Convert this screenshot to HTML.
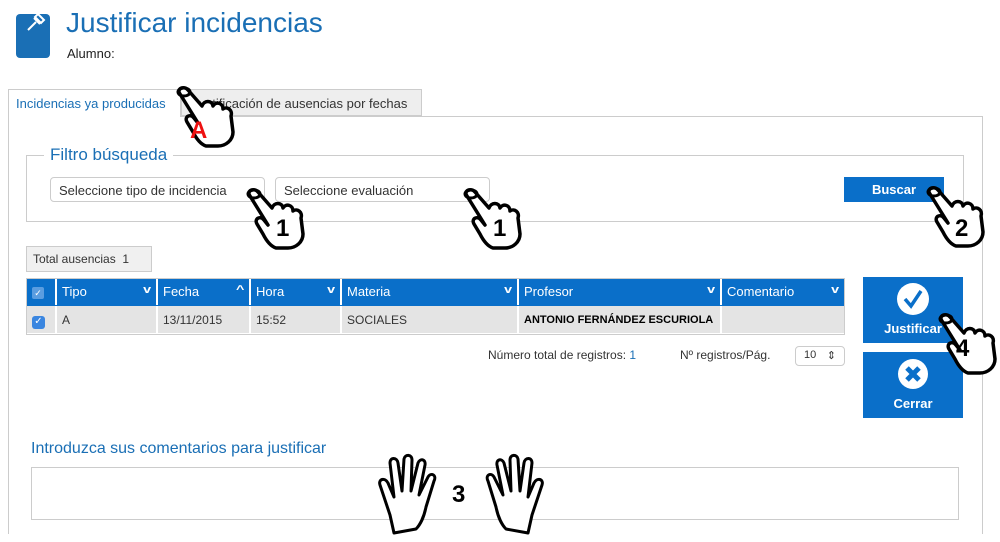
<!DOCTYPE html><html><head><meta charset="utf-8"><style>
*{box-sizing:border-box;margin:0;padding:0}
html{width:1000px;height:542px;overflow:hidden}
body{width:1000px;height:542px;background:#fff;font-family:"Liberation Sans",sans-serif;color:#333;position:relative;overflow:hidden;font-size:13px}
.a{position:absolute}
.blue{color:#1a6fb5}
.sel{position:absolute;border:1px solid #ccc;border-radius:4px;background:#fff;font-size:13px;padding:5px 8px;height:25px}
.th{position:absolute;top:0;height:26px;color:#fff;font-size:13px;padding:5px 5px;border-right:2px solid #fff}
.td{position:absolute;top:27px;height:27px;font-size:12px;padding:7px 5px;background:#e4e4e4;border-right:2px solid #fff}
.th i{position:absolute;right:6px;top:5px;font-style:normal;font-size:11px;font-weight:bold;transform:scaleX(1.3)}
.btn{position:absolute;background:#0a6fc9;color:#fff;font-weight:bold;text-align:center}
</style></head><body>
<svg width="0" height="0" style="position:absolute"><defs>
<g id="hand"><path d="M2 6 C-2 1 6 -3 10 2 L24 18 C26 12 34 12 35 18 C38 13 45 15 45 21 C49 18 55 22 53 28 L55 44 C55 52 48 58 40 58 L28 58 C22 56 18 50 15 44 L9 34 C6 29 12 25 16 30 L20 35 Z" fill="#fff" stroke="#000" stroke-width="3.5" stroke-linejoin="round"/><ellipse cx="6" cy="4" rx="6" ry="4" fill="none" stroke="#000" stroke-width="3"/></g>
<g id="palm"><path d="M10 60 L0 30 C-2 24 5 22 8 28 L14 42 L10 8 C10 2 17 2 18 8 L22 36 L24 4 C25 -1 32 -1 32 5 L31 36 L38 8 C40 3 46 4 45 10 L39 40 L48 22 C51 17 57 20 54 26 L46 52 C44 62 40 70 36 74 L14 78 Z" fill="#fff" stroke="#000" stroke-width="3" stroke-linejoin="round"/></g>
</defs></svg>
<div class="a" style="left:16px;top:14px;width:34px;height:44px;background:#1a6fb5;border-radius:4px"></div>
<svg class="a" style="left:24px;top:10px" width="26" height="26"><path d="M4 20 L12 12 M10 8 L16 14 M14 4 L20 10 L17 13 L11 7 Z" stroke="#fff" stroke-width="2" fill="none"/></svg>
<div class="a blue" style="left:66px;top:7px;font-size:28px">Justificar incidencias</div>
<div class="a" style="left:67px;top:46px;font-size:13px;color:#222">Alumno:</div>
<div class="a" style="left:8px;top:116px;width:975px;height:418px;border:1px solid #ccc;border-bottom:none"></div>
<div class="a" style="left:8px;top:89px;width:173px;height:28px;border:1px solid #ccc;border-bottom:none;background:#fff"></div>
<div class="a blue" style="left:16px;top:96px;font-size:13px">Incidencias ya producidas</div>
<div class="a" style="left:181px;top:89px;width:241px;height:27px;border:1px solid #ccc;background:#eee"></div>
<div class="a" style="left:192px;top:96px;font-size:13px;color:#333">Justificación de ausencias por fechas</div>
<div class="a" style="left:26px;top:155px;width:938px;height:67px;border:1px solid #ccc"></div>
<div class="a blue" style="left:44px;top:145px;font-size:17px;background:#fff;padding:0 6px">Filtro búsqueda</div>
<div class="sel" style="left:50px;top:177px;width:215px">Seleccione tipo de incidencia</div>
<div class="sel" style="left:275px;top:177px;width:215px">Seleccione evaluación</div>
<div class="btn" style="left:844px;top:177px;width:100px;height:25px;font-size:13px;padding-top:5px">Buscar</div>
<div class="a" style="left:26px;top:246px;width:126px;height:26px;border:1px solid #ccc;background:#f0f0f0;padding:5px 6px;font-size:12px">Total ausencias &nbsp;1</div>
<div class="a" style="left:26px;top:278px;width:819px;height:57px;border:1px solid #ccc;background:#fff">
<div class="a" style="left:0;top:0;width:817px;height:27px;background:#0a6fc9"></div>
<div class="th" style="left:0;width:30px"><span style="display:inline-block;width:12px;height:12px;background:#5a9de0;border-radius:2px;margin-top:3px;font-size:9px;text-align:center;line-height:12px">✓</span></div>
<div class="th" style="left:30px;width:101px">Tipo<i>v</i></div>
<div class="th" style="left:131px;width:93px">Fecha<i>^</i></div>
<div class="th" style="left:224px;width:91px">Hora<i>v</i></div>
<div class="th" style="left:315px;width:177px">Materia<i>v</i></div>
<div class="th" style="left:492px;width:203px">Profesor<i>v</i></div>
<div class="th" style="left:695px;width:122px;border:none">Comentario<i>v</i></div>
<div class="td" style="left:0;width:30px"><span style="display:inline-block;width:13px;height:13px;background:#3a86e0;border-radius:3px;color:#fff;font-size:10px;text-align:center">✓</span></div>
<div class="td" style="left:30px;width:101px">A</div>
<div class="td" style="left:131px;width:93px">13/11/2015</div>
<div class="td" style="left:224px;width:91px">15:52</div>
<div class="td" style="left:315px;width:177px">SOCIALES</div>
<div class="td" style="left:492px;width:203px;color:#000;font-weight:bold;font-size:11px;padding-top:8px">ANTONIO FERNÁNDEZ ESCURIOLA</div>
<div class="td" style="left:695px;width:122px;border:none"></div>
</div>
<div class="a" style="left:488px;top:348px;font-size:12px">Número total de registros: <span class="blue">1</span></div>
<div class="a" style="left:680px;top:348px;font-size:12px">Nº registros/Pág.</div>
<div class="sel" style="left:795px;top:346px;width:50px;height:20px;font-size:11px;padding:2px 8px">10 <span style="float:right">⇕</span></div>
<div class="btn" style="left:863px;top:277px;width:100px;height:66px;font-size:13px">
<svg style="margin-top:5px" width="34" height="34"><circle cx="17" cy="17" r="16" fill="#fff"/><path d="M9 17 L15 24 L25 9" stroke="#0a6fc9" stroke-width="3.5" fill="none"/></svg><div style="margin-top:2px">Justificar</div></div>
<div class="btn" style="left:863px;top:352px;width:100px;height:66px;font-size:13px">
<svg style="margin-top:6px" width="32" height="32"><circle cx="16" cy="16" r="15" fill="#fff"/><path d="M10 10 L22 22 M22 10 L10 22" stroke="#0a6fc9" stroke-width="5"/></svg><div style="margin-top:3px">Cerrar</div></div>
<div class="a blue" style="left:31px;top:440px;font-size:16px">Introduzca sus comentarios para justificar</div>
<div class="a" style="left:31px;top:467px;width:928px;height:53px;border:1px solid #ccc"></div>
<svg class="a" style="left:0;top:0" width="1000" height="542">
<use href="#hand" transform="translate(178,88)"/>
<text x="190" y="138" fill="#e11" font-size="24" font-weight="bold" font-family="Liberation Sans">A</text>
<use href="#hand" transform="translate(248,190)"/>
<text x="276" y="236" font-size="24" font-weight="bold" font-family="Liberation Sans">1</text>
<use href="#hand" transform="translate(465,190)"/>
<text x="493" y="236" font-size="24" font-weight="bold" font-family="Liberation Sans">1</text>
<use href="#hand" transform="translate(928,188)"/>
<text x="955" y="236" font-size="24" font-weight="bold" font-family="Liberation Sans">2</text>
<use href="#hand" transform="translate(940,315)"/>
<text x="956" y="356" font-size="24" font-weight="bold" font-family="Liberation Sans">4</text>
<use href="#palm" transform="translate(380,455)"/>
<use href="#palm" transform="translate(542,455) scale(-1,1)"/>
<text x="452" y="502" font-size="24" font-weight="bold" font-family="Liberation Sans">3</text>
</svg>
</body></html>
